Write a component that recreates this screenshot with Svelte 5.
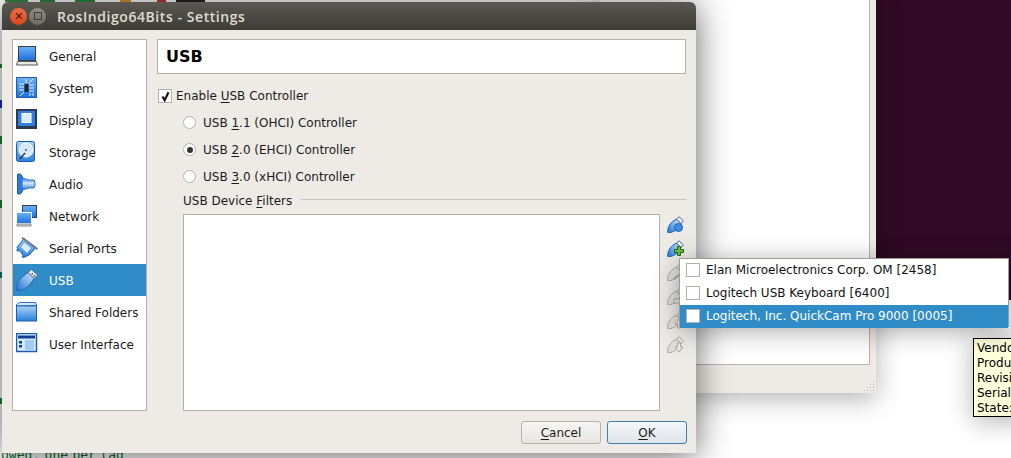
<script lang="ts">
  const pages = [
    { name: 'General', icon: 'general' },
    { name: 'System', icon: 'system' },
    { name: 'Display', icon: 'display' },
    { name: 'Storage', icon: 'storage' },
    { name: 'Audio', icon: 'audio' },
    { name: 'Network', icon: 'network' },
    { name: 'Serial Ports', icon: 'serial' },
    { name: 'USB', icon: 'usb' },
    { name: 'Shared Folders', icon: 'folder' },
    { name: 'User Interface', icon: 'ui' },
  ];

  const controllers = [
    { pre: 'USB ', key: '1', post: '.1 (OHCI) Controller', on: false },
    { pre: 'USB ', key: '2', post: '.0 (EHCI) Controller', on: true },
    { pre: 'USB ', key: '3', post: '.0 (xHCI) Controller', on: false },
  ];

  const devices = [
    { name: 'Elan Microelectronics Corp. OM [2458]', active: false },
    { name: 'Logitech USB Keyboard [6400]', active: false },
    { name: 'Logitech, Inc. QuickCam Pro 9000 [0005]', active: true },
  ];

  const filterTools = ['refresh', 'add', 'edit', 'remove', 'up', 'down'];
</script>

{#snippet plug(grey: boolean)}
  <path d="M0.8 16.5 C0.2 12 2.5 8.5 5.5 5.5 L9.5 3 L14 7.5 L11.5 11.5 C9 14.5 5 17 0.8 16.5Z" fill={grey ? '#e4e1dc' : 'url(#plug)'} stroke={grey ? '#a9a6a1' : '#1c5fb0'} />
  <path d="M9.5 3 L12 0.8 L16.5 5 L14 7.5Z" fill={grey ? '#f1efec' : '#fff'} stroke={grey ? '#a9a6a1' : '#45658f'} />
{/snippet}

<div class="desktop">
  <div class="terminal">
    <span class="terminal-top"></span>
    <span class="terminal-left"></span>
    <span class="terminal-bottom">owed, one per tag</span>
  </div>
  <div class="aubergine"></div>
  <div class="behind">
    <div class="behind-inner"></div>
    <svg class="grip" width="12" height="12" viewBox="0 0 12 12">
      <path d="M10 1h1v1h-1zM7 4h1v1H7zM10 4h1v1h-1zM4 7h1v1H4zM7 7h1v1H7zM10 7h1v1h-1zM1 10h1v1H1zM4 10h1v1H4zM7 10h1v1H7zM10 10h1v1h-1z" fill="#b9b5ae" />
    </svg>
  </div>

  <div class="dialog">
    <header class="titlebar">
      <span class="btn-close">
        <svg width="8" height="8" viewBox="0 0 8 8"><path d="M1.2 1.2l5.6 5.6M6.8 1.2l-5.6 5.6" stroke="#5a2413" stroke-width="1.3" /></svg>
      </span>
      <span class="btn-max"><i></i></span>
      <span class="title">RosIndigo64Bits - Settings</span>
    </header>

    <div class="body">
      <nav class="sidebar">
        <svg class="defs" width="0" height="0">
          <defs>
            <linearGradient id="blue" x1="0" y1="0" x2="0" y2="1">
              <stop offset="0" stop-color="#a9d2f7" />
              <stop offset="1" stop-color="#2a7fdc" />
            </linearGradient>
            <linearGradient id="plug" x1="1" y1="0" x2="0" y2="1">
              <stop offset="0" stop-color="#d5e9fb" />
              <stop offset="1" stop-color="#1f72d6" />
            </linearGradient>
            <linearGradient id="screen" x1="0" y1="0" x2="0" y2="1">
              <stop offset="0" stop-color="#6cb2f5" />
              <stop offset="1" stop-color="#1f6fe0" />
            </linearGradient>
            <linearGradient id="cone" x1="0" y1="0" x2="0" y2="1">
              <stop offset="0" stop-color="#3b86dc" />
              <stop offset="0.45" stop-color="#cfe6fb" />
              <stop offset="1" stop-color="#2a74cc" />
            </linearGradient>
          </defs>
        </svg>
        {#each pages as page}
          <div class="page" class:selected={page.icon === 'usb'}>
            <svg class="page-icon" width="22" height="22" viewBox="0 0 22 22">
              {#if page.icon === 'general'}
                <rect x="2.5" y="1.5" width="17" height="14" fill="url(#screen)" stroke="#3a3f46" />
                <path d="M1.5 16.5h19l1 3.5h-21z" fill="#e8e8e8" stroke="#55595e" />
              {:else if page.icon === 'system'}
                <rect x="0.5" y="0.5" width="20" height="20" fill="url(#screen)" stroke="#1c5fb0" />
                <rect x="8.5" y="7" width="4" height="8" fill="#222" />
                <path d="M3 7h5M3 10h5M3 13h5M13 8h5M13 11h5M13 14h5M4 19l4-4M13 6l4-4M14 16v3M17 16v3M10 2v4" stroke="#e6f2ff" stroke-width="1" />
              {:else if page.icon === 'display'}
                <rect x="0.5" y="0.5" width="20" height="19" fill="#2d3a4c" stroke="#2d3a4c" />
                <rect x="2" y="2" width="17" height="15" fill="#2f7fe6" />
                <rect x="6" y="4.5" width="9" height="9" fill="#d8ecff" stroke="#fff" />
              {:else if page.icon === 'storage'}
                <rect x="0.5" y="0.5" width="18" height="20" rx="2" fill="url(#blue)" stroke="#1c5fb0" />
                <circle cx="10" cy="9" r="7" fill="#d6e8f8" stroke="#fff" />
                <circle cx="10" cy="9" r="2" fill="#4b94de" stroke="#fff" />
                <path d="M4 18l5-6" stroke="#1f3f6a" stroke-width="1.5" />
              {:else if page.icon === 'audio'}
                <path d="M1.5 1h3l2 3v14l-2 3h-3z" fill="#2f7ad8" stroke="#1c5fb0" />
                <path d="M6 5l7 2h5c1.5 3 1.5 5 0 8h-5l-7 2z" fill="url(#cone)" stroke="#2a74cc" />
              {:else if page.icon === 'network'}
                <rect x="6.5" y="0.5" width="14" height="12" fill="url(#screen)" stroke="#3a3f46" />
                <rect x="0.5" y="7.5" width="15" height="11" fill="url(#screen)" stroke="#fff" />
                <path d="M1 19h14v2H1z" fill="#ddd" stroke="#666" stroke-width=".7" />
              {:else if page.icon === 'serial'}
                <path d="M1 10.5L8 1.5l12 9-7 7.5-4.5 2z" fill="url(#blue)" stroke="#1c5fb0" />
                <path d="M6 0.8l15.5 11.5" stroke="#6d7c8e" stroke-width="2" />
                <path d="M8 5l7.5 6-4.5 5.5L4.5 10z" fill="#d8ebfb" stroke="#4f97e2" stroke-width=".7" />
                <circle cx="7.5" cy="19.5" r="1.6" fill="#2a74cc" />
                <circle cx="2" cy="13" r="1.6" fill="#2a74cc" />
              {:else if page.icon === 'usb'}
                <path d="M0.8 21.5 C0 16 3 10.5 7 7L12 3.5l6 6-3.5 5C11 19 6 22.5 0.8 21.5Z" fill="url(#plug)" stroke="#1f66b8" />
                <path d="M12 3.5l3.5-3 6 5.5-3.5 3.5z" fill="#e9eef4" stroke="#5b7590" />
                <path d="M15.5 4h1.5v1.5h-1.5zM17.5 6h1.5v1.5h-1.5z" fill="#445" />
              {:else if page.icon === 'folder'}
                <path d="M0.5 5V3.5l3-2h16l1 3z" fill="#d5e7f8" stroke="#2a74cc" />
                <rect x="0.5" y="5" width="20" height="15" fill="url(#blue)" stroke="#1c5fb0" />
              {:else}
                <rect x="0.5" y="0.5" width="20" height="18" fill="#d7ebfd" stroke="#1c5fb0" stroke-width="1.5" />
                <rect x="2" y="2.5" width="17" height="3" fill="#0e3f92" />
                <rect x="9" y="7" width="9" height="10" fill="#a4cbf7" />
                <rect x="3" y="8" width="3" height="2.5" fill="#0e3f92" />
                <rect x="3" y="12" width="3" height="2.5" fill="#0e3f92" />
              {/if}
            </svg>
            <span class="page-name">{page.name}</span>
          </div>
        {/each}
      </nav>

      <main class="pane">
        <h1 class="heading">USB</h1>

        <label class="check-row">
          <span class="checkbox">
            <svg width="11" height="11" viewBox="0 0 11 11"><path d="M2.5 5.5l2.2 3.8L8.5 1.2" fill="none" stroke="#111" stroke-width="2.1" /></svg>
          </span>
          <span>Enable <u>U</u>SB Controller</span>
        </label>

        <div class="controllers">
          {#each controllers as c}
            <div class="radio-row">
              <span class="radio" class:on={c.on}></span>
              <span>{c.pre}<u>{c.key}</u>{c.post}</span>
            </div>
          {/each}
        </div>

        <div class="filters">
          <div class="group-title">
            <span>USB Device <u>F</u>ilters</span>
            <i></i>
          </div>
          <div class="filter-row">
            <div class="filter-list"></div>
            <div class="tools">
              {#each filterTools as tool}
                <svg width="18" height="18" viewBox="0 0 18 18">
                  {@render plug(tool !== 'refresh' && tool !== 'add')}
                  {#if tool === 'refresh'}
                    <circle cx="11.5" cy="11.5" r="4" fill="#3e8fe4" stroke="#1c5fb0" />
                  {:else if tool === 'add'}
                    <path d="M10.5 6.5h3v3h3v3h-3v3h-3v-3h-3v-3h3z" fill="#6cc04a" stroke="#1e6b17" />
                  {:else if tool === 'edit'}
                    <path d="M7 15l9-7" stroke="#a9a6a1" stroke-width="2" />
                  {:else if tool === 'remove'}
                    <path d="M7 11h9v4H7z" fill="#efedea" stroke="#a9a6a1" />
                  {:else if tool === 'up'}
                    <path d="M12 7l4 5h-2.5v4h-3v-4H8z" fill="#efedea" stroke="#a9a6a1" />
                  {:else}
                    <path d="M12 16l4-5h-2.5V7h-3v4H8z" fill="#efedea" stroke="#a9a6a1" />
                  {/if}
                </svg>
              {/each}
            </div>
          </div>
        </div>
      </main>
    </div>

    <footer class="actions">
      <button class="push"><u>C</u>ancel</button>
      <button class="push default"><u>O</u>K</button>
    </footer>
  </div>

  <div class="tooltip">
    Vendor: Logitech, Inc.<br />Product: QuickCam<br />Revision: 0005<br />Serial: 1234<br />State: Busy
  </div>

  <ul class="popup">
    {#each devices as d}
      <li class:active={d.active}><span class="popup-box"></span><span>{d.name}</span></li>
    {/each}
  </ul>
</div>

<style>
  :global(body) {
    margin: 0;
  }

  .desktop {
    position: relative;
    width: 1011px;
    height: 458px;
    overflow: hidden;
    background: #fff;
    font-family: 'DejaVu Sans', sans-serif;
    font-size: 12px;
    color: #1c1b19;
  }

  u {
    text-underline-offset: 2px;
  }

  /* other windows on the desktop, behind the dialog */
  .terminal {
    position: absolute;
    inset: 0;
    font-family: 'DejaVu Sans Mono', monospace;
    font-size: 13px;
    color: #0a6a2a;
  }

  .terminal-top {
    position: absolute;
    left: 0;
    top: 0;
    width: 230px;
    height: 2px;
    background: linear-gradient(90deg, #fff 5px, #2e8a3e 5px 28px, #fff 28px 40px, #2e8a3e 40px 55px, #fff 55px 75px, #2e8a3e 75px 95px, #fff 95px 120px, #e0982f 120px 131px, #fff 131px 157px, #c03a3a 157px 166px, #fff 166px 176px, #222 176px 205px, #fff 205px);
  }

  .terminal-left {
    position: absolute;
    left: 0;
    top: 0;
    width: 2px;
    height: 458px;
    background: linear-gradient(#fff 64px, #1f8a3a 64px 68px, #fff 68px 100px, #1c2fd0 100px 108px, #fff 108px 136px, #1f8a3a 136px 144px, #fff 144px 200px, #1f8a3a 200px 208px, #fff 208px 272px, #0f7f7f 272px 278px, #fff 278px 398px, #1f8a3a 398px 404px, #fff 404px);
  }

  .terminal-bottom {
    position: absolute;
    left: 1px;
    top: 447px;
    word-spacing: -3.4px;
  }

  .aubergine {
    position: absolute;
    left: 876px;
    top: 0;
    right: 0;
    height: 300px;
    background: #300a24;
  }

  .behind {
    position: absolute;
    left: 600px;
    top: -10px;
    width: 276px;
    height: 403px;
    background: #eeebe7;
    box-shadow: 0 6px 24px rgba(0, 0, 0, 0.3);
  }

  .behind-inner {
    width: 270px;
    height: 375px;
    background: #fff;
    border-right: 1px solid #b8b4ae;
    border-bottom: 1px solid #b8b4ae;
    box-sizing: border-box;
  }

  .grip {
    position: absolute;
    right: 1px;
    bottom: 1px;
  }

  .dialog {
    position: absolute;
    left: 2px;
    top: 2px;
    width: 694px;
    height: 451px;
    display: flex;
    flex-direction: column;
    background: #eeebe7;
    border-radius: 6px 6px 0 0;
    box-shadow: 0 3px 34px rgba(0, 0, 0, 0.6);
  }

  .titlebar {
    height: 28px;
    display: flex;
    align-items: center;
    gap: 2px;
    padding-left: 8px;
    background: linear-gradient(#5a5850, #3d3c36);
    border-radius: 6px 6px 0 0;
    flex: none;
  }

  .btn-close,
  .btn-max {
    width: 17px;
    height: 17px;
    border-radius: 50%;
    display: grid;
    place-items: center;
  }

  .btn-close {
    background: linear-gradient(#ee6c46, #d9481f);
  }

  .btn-max {
    background: linear-gradient(#8f8d85, #6d6b63);
  }

  .btn-max i {
    width: 6px;
    height: 6px;
    border: 1px solid #3d3c36;
  }

  .title {
    margin-left: 9px;
    font-family: 'Open Sans', sans-serif;
    font-size: 14px;
    font-weight: 600;
    color: #dfdbd2;
    letter-spacing: 0.56px;
  }

  .body {
    flex: 1;
    display: flex;
    gap: 10px;
    padding: 9px 10px 0;
    min-height: 0;
  }

  .sidebar {
    width: 133px;
    height: 370px;
    background: #fff;
    border: 1px solid #b5b1ab;
    flex: none;
  }

  .defs {
    position: absolute;
  }

  .page {
    height: 32px;
    display: flex;
    align-items: center;
    gap: 11px;
    padding-left: 3px;
  }

  .page-name {
    padding-top: 2px;
  }

  .page.selected {
    background: #308cc6;
    color: #fff;
  }

  .pane {
    flex: 1;
    display: flex;
    flex-direction: column;
    min-width: 0;
  }

  .heading {
    margin: 0;
    height: 33px;
    line-height: 33px;
    padding-left: 8px;
    background: #fff;
    border: 1px solid #b5b1ab;
    font-size: 16px;
    font-weight: 700;
    color: #000;
    width: 519px;
  }

  .check-row {
    display: flex;
    align-items: center;
    gap: 4px;
    height: 16px;
    margin-top: 14px;
    margin-left: 1px;
  }

  .checkbox {
    width: 12px;
    height: 12px;
    background: #fff;
    border: 1px solid #b5b1ab;
    display: grid;
    place-items: center;
    flex: none;
  }

  .controllers {
    margin-top: 5px;
    margin-left: 26px;
  }

  .radio-row {
    height: 27px;
    display: flex;
    align-items: center;
    gap: 7px;
  }

  .radio {
    width: 11px;
    height: 11px;
    border: 1px solid #b5b1ab;
    border-radius: 50%;
    background: #fff;
    display: grid;
    place-items: center;
  }

  .radio.on::after {
    content: '';
    width: 6px;
    height: 6px;
    border-radius: 50%;
    background: #333;
  }

  .filters {
    margin-top: 2px;
    margin-left: 26px;
    display: flex;
    flex-direction: column;
  }

  .group-title {
    height: 18px;
    display: flex;
    align-items: center;
    gap: 9px;
  }

  .group-title i {
    flex: 1;
    height: 1px;
    margin-top: -3px;
    background: #c8c4be;
  }

  .filter-row {
    display: flex;
    gap: 7px;
    margin-top: 4px;
  }

  .filter-list {
    width: 475px;
    height: 195px;
    background: #fff;
    border: 1px solid #b5b1ab;
  }

  .tools {
    display: flex;
    flex-direction: column;
    gap: 6px;
    padding-top: 2px;
  }

  .actions {
    flex: none;
    height: 32px;
    display: flex;
    justify-content: flex-end;
    gap: 6px;
    padding: 0 9px 9px 0;
    box-sizing: border-box;
    align-items: flex-start;
  }

  .push {
    width: 80px;
    height: 23px;
    padding: 0;
    font: inherit;
    color: inherit;
    border: 1px solid #b5b1ab;
    border-radius: 3px;
    background: linear-gradient(#f6f5f3, #e9e6e1);
  }

  .push.default {
    border-color: #3f7fa9;
    background: linear-gradient(#f4f7f9, #dde4e9);
  }

  .tooltip {
    position: absolute;
    left: 973px;
    top: 338px;
    width: 160px;
    height: 79px;
    padding: 2px 3px;
    box-sizing: border-box;
    line-height: 15px;
    background: #ffffdc;
    border: 1px solid #000;
    color: #000;
    white-space: nowrap;
    box-shadow: 0 4px 26px rgba(0, 0, 0, 0.3);
  }

  .popup {
    position: absolute;
    left: 679px;
    top: 258px;
    width: 330px;
    height: 69px;
    margin: 0;
    padding: 0;
    list-style: none;
    background: #fff;
    border: 1px solid #9f9c97;
    box-sizing: border-box;
    box-shadow: 0 4px 26px rgba(0, 0, 0, 0.35);
  }

  .popup li {
    height: 23px;
    display: flex;
    align-items: center;
    gap: 6px;
    padding: 0 0 1px 6px;
    box-sizing: border-box;
    color: #111;
  }

  .popup li.active {
    background: #308cc6;
    color: #fff;
  }

  .popup-box {
    width: 12px;
    height: 12px;
    background: #fff;
    border: 1px solid #b5b1ab;
    flex: none;
  }
</style>
